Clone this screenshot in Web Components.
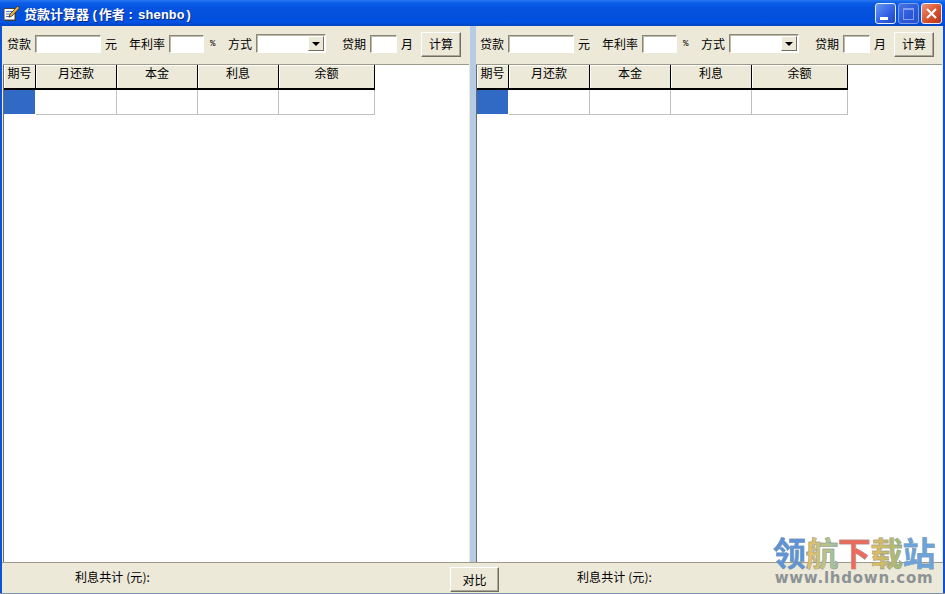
<!DOCTYPE html>
<html><head><meta charset="utf-8">
<style>
html,body{margin:0;padding:0;width:945px;height:594px;overflow:hidden;background:#ece9d8}
body{font:12px "Noto Sans CJK SC","Liberation Sans",sans-serif;color:#000}
</style></head><body>
<template id="btn-t"><style>
:host{display:inline-flex;align-items:center;justify-content:center;box-sizing:border-box;background:#ece9d8;border:1px solid;border-color:#fff #716f64 #716f64 #fff;box-shadow:inset -1px -1px 0 #aca899;font-size:12px;line-height:14px}
</style><slot></slot></template>
<template id="field-t"><style>
:host{display:block;box-sizing:border-box;height:18px;background:#fff;border:1px solid;border-color:#8a8778 #fff #fff #8a8778;box-shadow:inset 1px 1px 0 #bdbaa8}
</style></template>
<template id="combo-t"><style>
:host{display:flex;justify-content:flex-end;box-sizing:border-box;height:19px;background:#fff;border:1px solid;border-color:#8a8778 #fff #fff #8a8778;box-shadow:inset 1px 1px 0 #bdbaa8;padding:1px}
.a{width:16px;background:#ece9d8;border:1px solid;border-color:#fff #716f64 #716f64 #fff;box-sizing:border-box;display:flex;align-items:center;justify-content:center}
.a i{display:block;width:0;height:0;border:4px solid transparent;border-top:4px solid #000;border-bottom:0}
</style><div class="a"><i></i></div></template>
<template id="title-t"><style>
:host{display:flex;align-items:center;height:26px;box-sizing:border-box;padding-left:3px;background:linear-gradient(180deg,#2a78ee 0,#0a5ee8 3px,#0553df 8px,#0250dc 16px,#0252e4 22px,#0345c0 26px);color:#fff;flex:none}
.t{margin-left:4px;font:bold 13px "Noto Sans CJK SC","Liberation Serif",serif;text-shadow:1px 1px 0 #0a2a80;white-space:nowrap}
svg{display:block}
.c{margin-left:auto;display:flex;gap:2px;padding-right:3px}
.w{width:21px;height:21px;box-sizing:border-box;border:1px solid #e6eefc;border-radius:3px;background:linear-gradient(135deg,#5f8df0,#2a5ae0 60%,#2048c0);position:relative;display:flex}
.m{background:linear-gradient(135deg,#6a96f2,#2f5fe4 60%,#1f47c4)}
.m::after{content:"";position:absolute;left:4px;bottom:3px;width:8px;height:3px;background:#fff}
.x{background:linear-gradient(135deg,#ec9478,#d8502c 55%,#b83618)}
.r{background:linear-gradient(135deg,#4674e4,#2a58d8 60%,#2a50c8);border-color:#7f9eea}
.r::after{content:"";position:absolute;left:4px;top:4px;width:9px;height:9px;border:1px solid #7f9fee;border-top-width:2px}
</style>
<svg width="17" height="17" viewBox="0 0 17 17"><path d="M2 5h11v11H2z" fill="#333"/><path d="M1 3.500h11v11.500H1z" fill="#fff" stroke="#444" stroke-width="1"/><path d="M3 6.500h7M3 9h6M3 11.500h4" stroke="#4a78c8"/><path d="M14.500 1l2 2-7.500 8-3 1.200 1-3z" fill="#f2b63c" stroke="#222" stroke-width=".8"/></svg>
<span class="t"><slot></slot></span>
<div class="c"><div class="w m"></div><div class="w r"></div><div class="w x"><svg width="19" height="19" viewBox="0 0 19 19"><path d="M5 5l9 9M14 5l-9 9" stroke="#fff" stroke-width="2.200"/></svg></div></div>
</template>
<template id="panel-t"><style>
:host{display:flex;flex-direction:column;width:466px;flex:none;background:#fff}
.bar{display:flex;align-items:center;height:39px;box-sizing:border-box;padding:0 0 3px 4px;background:#ece9d8;border-bottom:1px solid #9d9a8a;flex:none}
span{display:block;line-height:14px;white-space:nowrap}
.l1{margin-right:4px}.g{margin-left:4px}
.p{font:9px "Liberation Mono",monospace;margin-left:6px;width:6px}
.grid{flex:1;display:grid;grid-template-columns:32px 81px 81px 81px 96px;grid-template-rows:25px 25px;align-content:start;justify-content:start;border-left:1px solid #6b6b6b;background:#fff}
.h{background:#ece9d8;border-right:1px solid #000;border-bottom:2px solid #000;box-sizing:border-box;text-align:center;line-height:14px;padding-top:1px;box-shadow:inset 1px 1px 0 #fff}
.d{border-right:1px solid #c0c0c0;border-bottom:1px solid #c0c0c0;box-sizing:border-box}
.s{background:#316ac5;border-right:1px solid #fff;border-bottom:1px solid #fff}
</style>
<div class="bar">
<span class="l1">贷款</span><loan-field style="width:66px"></loan-field><span class="g">元</span>
<span style="margin-left:12px">年利率</span><loan-field style="width:35px;margin-left:4px"></loan-field><span class="p">%</span>
<span style="margin-left:12px">方式</span><loan-combo style="width:70px;margin-left:4px"></loan-combo>
<span style="margin-left:16px">贷期</span><loan-field style="width:27px;margin-left:4px"></loan-field><span class="g">月</span>
<loan-btn style="width:40px;height:25px;margin-left:8px;margin-top:1px">计算</loan-btn>
</div>
<div class="grid">
<div class="h">期号</div><div class="h">月还款</div><div class="h">本金</div><div class="h">利息</div><div class="h">余额</div>
<div class="d s"></div><div class="d"></div><div class="d"></div><div class="d"></div><div class="d"></div>
</div></template>
<template id="foot-t"><style>
:host{display:flex;align-items:flex-start;height:31px;box-sizing:border-box;background:#ece9d8;border-top:1px solid #9d9a8a;flex:none}
span{letter-spacing:.1px;white-space:nowrap;line-height:14px;margin-top:7px}
.a{margin-left:73px;width:375px}
.b{margin-left:78px}
loan-btn{width:49px;height:25px;margin-top:4px}
</style><span class="a">利息共计 (元):</span><loan-btn>对比</loan-btn><span class="b">利息共计 (元):</span></template>
<template id="mark-t"><style>
:host{display:block;position:absolute;right:10px;bottom:7px;width:162px;text-align:center}
.a{font:bold 33px/34px "Noto Sans CJK SC",sans-serif;letter-spacing:-.6px;white-space:nowrap;margin-bottom:1px;background:linear-gradient(90deg,#5b94d8 0,#5b94d8 20%,#e8c060 22%,#9cc4a0 39%,#f06a5a 41%,#f06a5a 59%,#e8bc60 61%,#a0b878 79%,#6aa4dc 81%,#6aa4dc 100%);-webkit-background-clip:text;background-clip:text;color:transparent;-webkit-text-stroke:.4px #8a93a0}
.b{font:bold 15px/16px "DejaVu Sans",sans-serif;color:#8d9296;white-space:nowrap;letter-spacing:.75px;display:flex;justify-content:center}
</style><div class="a">领航下载站</div><div class="b">www.lhdown.com</div></template>
<template id="app-t"><style>
:host{display:flex;flex-direction:column;width:945px;height:594px;box-sizing:border-box;background:#ece9d8;overflow:hidden;position:relative;border-bottom:1px solid #7f8fb0}
</style><slot></slot></template>
<template id="body-t"><style>
:host{flex:1;display:flex;flex-direction:column;min-height:0;border-left:2px solid #0d54d4;border-right:2px solid #0d54d4}
</style><slot></slot></template>
<template id="main-t"><style>
:host{flex:1;display:flex;min-height:0;padding:0 1px;background:#ece9d8}
</style><slot></slot></template>
<template id="split-t"><style>
:host{display:block;width:7px;flex:none;background:linear-gradient(90deg,#ece9d8 0,#ece9d8 1px,#b6cbe4 1px)}
</style></template>
<calc-app>
<title-bar>贷款计算器<b style="font:bold 13px 'Liberation Mono',monospace;margin-left:2px">(</b>作者<b style="font:bold 13px 'Liberation Mono',monospace;margin-left:2px">:</b><b style="font:bold 13px 'Liberation Mono',monospace;margin-left:3px">shenbo)</b></title-bar>
<win-body>
<main-area><loan-panel></loan-panel><split-bar></split-bar><loan-panel></loan-panel></main-area>
<foot-bar></foot-bar>
</win-body>
<water-mark></water-mark>
</calc-app>
<script>
const reg=(n,t)=>customElements.define(n,class extends HTMLElement{constructor(){super();this.attachShadow({mode:"open"}).appendChild(document.getElementById(t).content.cloneNode(true))}});
[["loan-btn","btn-t"],["loan-field","field-t"],["loan-combo","combo-t"],["title-bar","title-t"],["loan-panel","panel-t"],["foot-bar","foot-t"],["water-mark","mark-t"],["calc-app","app-t"],["win-body","body-t"],["main-area","main-t"],["split-bar","split-t"]].forEach(a=>reg(...a));
</script>
</body></html>
